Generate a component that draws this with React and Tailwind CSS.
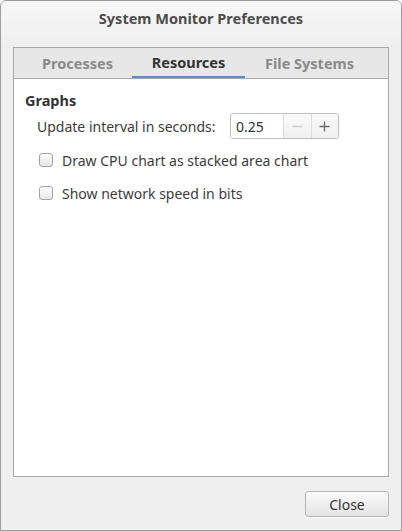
export default function App() {
  const font = { fontFamily: '"Noto Sans", "Open Sans", sans-serif' };
  return (
    <div
      style={font}
      className="w-[402px] h-[531px] flex flex-col border border-[#9c9c9c] rounded-t-[6px] bg-[#efefef] text-[#3c3c3c] overflow-hidden"
    >
      {/* title */}
      <div className="h-[46px] flex items-start justify-center pt-[7px] bg-gradient-to-b from-[#f7f7f7] to-[#efefef]">
        <span className="text-[14.5px] leading-[20px] font-bold text-[#4c4c4c]">
          System Monitor Preferences
        </span>
      </div>

      {/* notebook */}
      <div className="mx-[12px] h-[430px] flex flex-col border border-[#a9a9a9] bg-white">
        <div className="h-[31px] flex items-stretch bg-[#e7e7e7] border-b border-[#ababab] pl-[9px]">
          <div className="w-[109px] flex items-center justify-center pt-[1px] text-[14.5px] font-bold text-[#8a8a8a]">
            Processes
          </div>
          <div className="w-[113px] flex items-center justify-center pt-[1px] text-[14.5px] font-bold text-[#333333] border-b-2 border-[#5b8ad0]">
            Resources
          </div>
          <div className="w-[129px] flex items-center justify-center pt-[1px] text-[14.5px] font-bold text-[#8a8a8a]">
            File Systems
          </div>
        </div>
        <div className="flex-1 flex flex-col pl-[11px] pt-[11px]">
          <div className="text-[14.5px] leading-[20px] font-bold text-[#333333]">Graphs</div>
          <div className="flex flex-col pl-[12px] mt-[3px]">
            <div className="flex items-center h-[26px]">
              <span className="text-[14px] w-[193px]">Update interval in seconds:</span>
              <div className="flex h-[26px] w-[109px] border border-[#bdbdbd] rounded-[3px] overflow-hidden">
                <div className="w-[53px] flex items-center pl-[5px] text-[14px] bg-white text-[#333333]">0.25</div>
                <div className="w-[28px] flex items-center justify-center border-l border-[#dcdcdc] bg-gradient-to-b from-[#fafafa] to-[#f0f0f0]">
                  <svg width="11" height="11" viewBox="0 0 11 11">
                    <path d="M0.5 5.5H10.5" stroke="#d0d0d0" strokeWidth="1.3" />
                  </svg>
                </div>
                <div className="w-[28px] flex items-center justify-center border-l border-[#dcdcdc] bg-gradient-to-b from-[#fafafa] to-[#f0f0f0]">
                  <svg width="11" height="11" viewBox="0 0 11 11">
                    <path d="M0.5 5.5H10.5M5.5 0.5V10.5" stroke="#6a6a6a" strokeWidth="1.3" />
                  </svg>
                </div>
              </div>
            </div>
            <div className="flex items-center h-[18px] mt-[12px] pl-[2px]">
              <div className="w-[14px] h-[14px] rounded-[3px] border border-[#a3a3a3] bg-gradient-to-b from-[#ffffff] to-[#e6e6e6]" />
              <span className="text-[14px] ml-[9px]">Draw CPU chart as stacked area chart</span>
            </div>
            <div className="flex items-center h-[18px] mt-[15px] pl-[2px]">
              <div className="w-[14px] h-[14px] rounded-[3px] border border-[#a3a3a3] bg-gradient-to-b from-[#ffffff] to-[#e6e6e6]" />
              <span className="text-[14px] ml-[9px]">Show network speed in bits</span>
            </div>
          </div>
        </div>
      </div>

      {/* buttons */}
      <div className="flex justify-end mx-[12px] mt-[14px]">
        <button className="w-[84px] h-[26px] rounded-[3px] border border-[#b5b5b5] bg-gradient-to-b from-[#fafafa] to-[#e4e4e4] text-[14px] text-[#333333] shadow-[0_1px_0_#ffffff]">
          Close
        </button>
      </div>
    </div>
  );
}
